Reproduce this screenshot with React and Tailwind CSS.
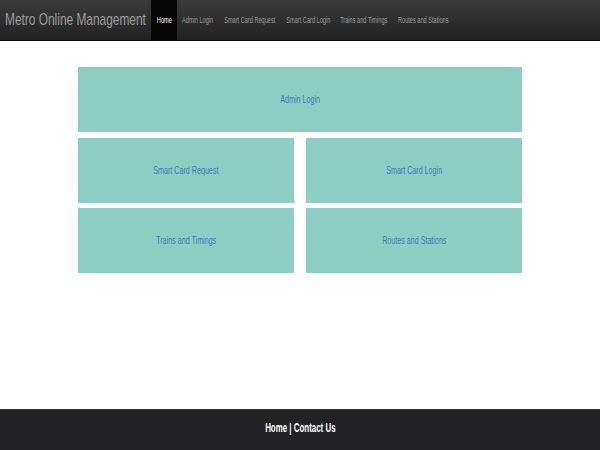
import React from "react";

const navItems = [
  { label: "Home", w: "w-[26px]", active: true },
  { label: "Admin Login", w: "w-[42px]" },
  { label: "Smart Card Request", w: "w-[62px]" },
  { label: "Smart Card Login", w: "w-[54px]" },
  { label: "Trains and Timings", w: "w-[58px]" },
  { label: "Routes and Stations", w: "w-[61px]" },
];

function Narrow({ children, className = "" }) {
  return (
    <span className={"inline-block whitespace-nowrap scale-x-[0.66] " + className}>
      {children}
    </span>
  );
}

function Tile({ label, className = "" }) {
  return (
    <div className={"flex items-center justify-center bg-[#8ecdc4] h-[65px] " + className}>
      <span className="inline-block whitespace-nowrap scale-x-[0.68] text-[10.5px] text-[#3a7bb5] pt-[1px]">
        {label}
      </span>
    </div>
  );
}

export default function App() {
  return (
    <div
      className="min-h-[450px] h-[450px] flex flex-col bg-white"
      style={{ fontFamily: '"Liberation Sans", Arial, sans-serif' }}
    >
      <nav className="h-[41px] shrink-0 flex bg-gradient-to-b from-[#3c3c3c] to-[#222222] border-b border-[#080808]">
        <div className="w-[151px] pl-[5px] flex items-center">
          <span className="inline-block whitespace-nowrap origin-left scale-x-[0.7] text-[17px] text-[#9d9d9d]">
            Metro Online Management
          </span>
        </div>
        <div className="flex">
          {navItems.map((n) => (
            <div
              key={n.label}
              className={
                "flex items-center justify-center " +
                n.w +
                (n.active ? " bg-[#080808] text-white" : " text-[#9d9d9d]")
              }
            >
              <Narrow className="text-[8.5px]">{n.label}</Narrow>
            </div>
          ))}
        </div>
      </nav>

      <main className="flex-1 pt-[26px]">
        <div className="w-[444px] mx-auto">
          <Tile label="Admin Login" className="mb-[6px]" />
          <div className="grid grid-cols-2 gap-x-[12px] mb-[5px]">
            <Tile label="Smart Card Request" />
            <Tile label="Smart Card Login" />
          </div>
          <div className="grid grid-cols-2 gap-x-[12px]">
            <Tile label="Trains and Timings" />
            <Tile label="Routes and Stations" />
          </div>
        </div>
      </main>

      <footer className="h-[41px] shrink-0 bg-[#232325] border-t border-[#3a3a3a] flex items-center justify-center pb-[5px]">
        <Narrow className="text-[12px] font-bold text-white scale-x-[0.63]">
          Home | Contact Us
        </Narrow>
      </footer>
    </div>
  );
}
